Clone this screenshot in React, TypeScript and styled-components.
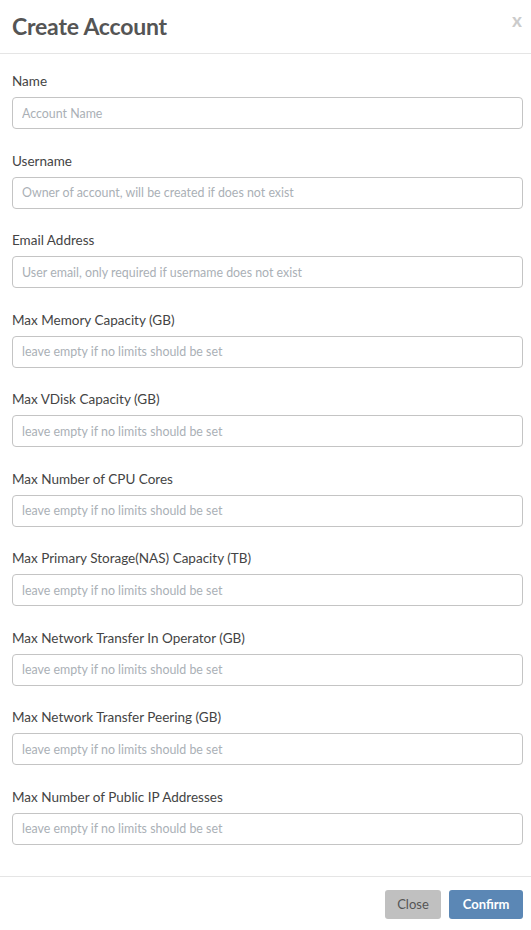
import React from "react";
import styled, { createGlobalStyle } from "styled-components";

const Global = createGlobalStyle`
  html, body { margin: 0; padding: 0; background: #fff; }
  body { font-family: Lato, "Open Sans", sans-serif; color: #444; }
  * { box-sizing: border-box; }
`;

const Modal = styled.div`
  width: 531px;
  display: flex;
  flex-direction: column;
`;

const Header = styled.div`
  height: 54px;
  display: flex;
  align-items: center;
  justify-content: space-between;
  padding: 0 9px 2px 12px;
  border-bottom: 1px solid #e5e5e5;
`;

const Title = styled.h4`
  margin: 0;
  font-size: 23px;
  font-weight: 700;
  color: #555;
  letter-spacing: -0.2px;
`;

const CloseX = styled.span`
  font-size: 19px;
  line-height: 19px;
  font-weight: 700;
  color: #cbcbcb;
  align-self: flex-start;
  margin-top: 10px;
`;

const Body = styled.div`
  padding: 18px 8px 9px 12px;
  display: flex;
  flex-direction: column;
`;

const Field = styled.div`
  display: flex;
  flex-direction: column;
  margin-bottom: 22.5px;
  &:last-child { margin-bottom: 0; }
`;

const Label = styled.label`
  font-size: 13.5px;
  line-height: 18px;
  color: #444;
  margin-bottom: 7px;
`;

const Input = styled.input`
  height: 32px;
  width: 511px;
  border: 1px solid #c4c4c4;
  border-radius: 4px;
  padding: 0 9px;
  font-family: Lato, "Open Sans", sans-serif;
  font-size: 12.4px;
  color: #444;
  &::placeholder { color: #aab0b6; }
`;

const Footer = styled.div`
  border-top: 1px solid #e5e5e5;
  margin-top: 22px;
  padding: 13px 8px 12px 12px;
  display: flex;
  justify-content: flex-end;
  gap: 8px;
`;

const Button = styled.button<{ $primary?: boolean }>`
  height: 29px;
  border: none;
  border-radius: 3px;
  padding: 0 ${(p) => (p.$primary ? "13.5px" : "12.5px")};
  font-family: Lato, "Open Sans", sans-serif;
  font-size: 13px;
  font-weight: ${(p) => (p.$primary ? 700 : 400)};
  background: ${(p) => (p.$primary ? "#5b87b5" : "#c0c0c0")};
  color: ${(p) => (p.$primary ? "#fff" : "#555")};
`;

const fields: [string, string][] = [
  ["Name", "Account Name"],
  ["Username", "Owner of account, will be created if does not exist"],
  ["Email Address", "User email, only required if username does not exist"],
  ["Max Memory Capacity (GB)", "leave empty if no limits should be set"],
  ["Max VDisk Capacity (GB)", "leave empty if no limits should be set"],
  ["Max Number of CPU Cores", "leave empty if no limits should be set"],
  ["Max Primary Storage(NAS) Capacity (TB)", "leave empty if no limits should be set"],
  ["Max Network Transfer In Operator (GB)", "leave empty if no limits should be set"],
  ["Max Network Transfer Peering (GB)", "leave empty if no limits should be set"],
  ["Max Number of Public IP Addresses", "leave empty if no limits should be set"],
];

export default function App() {
  return (
    <>
      <Global />
      <Modal>
        <Header>
          <Title>Create Account</Title>
          <CloseX>x</CloseX>
        </Header>
        <Body>
          {fields.map(([label, ph]) => (
            <Field key={label}>
              <Label>{label}</Label>
              <Input placeholder={ph} />
            </Field>
          ))}
        </Body>
        <Footer>
          <Button>Close</Button>
          <Button $primary>Confirm</Button>
        </Footer>
      </Modal>
    </>
  );
}
